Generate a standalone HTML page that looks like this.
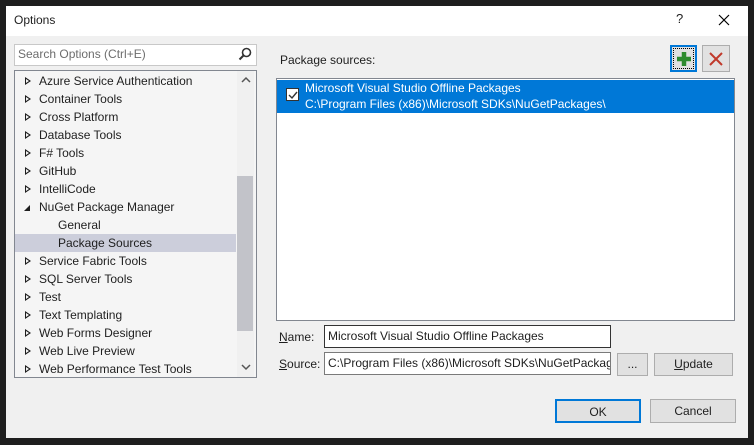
<!DOCTYPE html><html><head><style>
*{margin:0;padding:0;box-sizing:border-box}
body{width:754px;height:445px;background:#1e1e1e;font-family:"Segoe UI","Liberation Sans",sans-serif;font-size:12px;color:#1e1e1e;position:relative;overflow:hidden}
.a{position:absolute}
.dlg{left:6px;top:6px;width:742px;height:432px;background:#f0f0f0}
.title{left:6px;top:6px;width:742px;height:30px;background:#fff}
.tree{left:14px;top:70px;width:243px;height:308px;border:1px solid #828790;background:#f5f5f5;overflow:hidden}
.row{position:absolute;left:0;height:18px;line-height:18px;white-space:nowrap}
.tri{position:absolute;left:10px;top:5px;width:0;height:0;border-left:6px solid #1e1e1e;border-top:4px solid transparent;border-bottom:4px solid transparent}
.tri:after{content:"";position:absolute;left:-5px;top:-2px;border-left:3px solid #f5f5f5;border-top:2px solid transparent;border-bottom:2px solid transparent}
.inp{background:#fff;border:1px solid #7a7a7a;height:23px;line-height:21px;padding-left:3px;white-space:nowrap;overflow:hidden}
.btn{background:#e1e1e1;border:1px solid #adadad;text-align:center;line-height:21px}
</style></head><body>
<div class="a dlg"></div>
<div class="a title"></div>
<div class="a" style="left:14px;top:13px;font-size:12px">Options</div>
<div class="a" style="left:676px;top:11px;font-size:13px">?</div>
<svg class="a" style="left:718px;top:14px" width="12" height="12"><path d="M1 1L11 11M11 1L1 11" stroke="#000" stroke-width="1.2"/></svg>
<div class="a inp" style="left:14px;top:44px;width:243px;height:22px;border-color:#c8c8c8;color:#6d6d6d;line-height:19px">Search Options (Ctrl+E)</div>
<svg class="a" style="left:238px;top:47px" width="14" height="14"><circle cx="8.5" cy="5.5" r="4" fill="none" stroke="#333" stroke-width="1.6"/><path d="M5.5 8.5L1.5 12.5" stroke="#333" stroke-width="2"/></svg>
<div class="a tree">
<div class="a" style="left:222px;top:0;width:17px;height:306px;background:#f0f0f0"></div>
<div class="a" style="left:222px;top:105px;width:16px;height:155px;background:#c2c3c9"></div>
<svg class="a" style="left:226px;top:5px" width="10" height="8"><path d="M1 6L5 2L9 6" fill="none" stroke="#555" stroke-width="1.5"/></svg>
<svg class="a" style="left:226px;top:292px" width="10" height="8"><path d="M1 2L5 6L9 2" fill="none" stroke="#555" stroke-width="1.5"/></svg>
<div class="a" style="left:0;top:163px;width:221px;height:18px;background:#ccceDB"></div>
<div class="row" style="top:1px"><span class="tri"></span><span style="margin-left:24px">Azure Service Authentication</span></div>
<div class="row" style="top:19px"><span class="tri"></span><span style="margin-left:24px">Container Tools</span></div>
<div class="row" style="top:37px"><span class="tri"></span><span style="margin-left:24px">Cross Platform</span></div>
<div class="row" style="top:55px"><span class="tri"></span><span style="margin-left:24px">Database Tools</span></div>
<div class="row" style="top:73px"><span class="tri"></span><span style="margin-left:24px">F# Tools</span></div>
<div class="row" style="top:91px"><span class="tri"></span><span style="margin-left:24px">GitHub</span></div>
<div class="row" style="top:109px"><span class="tri"></span><span style="margin-left:24px">IntelliCode</span></div>
<div class="row" style="top:127px"><svg class="a" style="left:8px;top:6px" width="8" height="8"><path d="M7 1L7 7L1 7Z" fill="#1e1e1e"/></svg><span style="margin-left:24px">NuGet Package Manager</span></div>
<div class="row" style="top:145px"><span style="margin-left:43px">General</span></div>
<div class="row" style="top:163px"><span style="margin-left:43px">Package Sources</span></div>
<div class="row" style="top:181px"><span class="tri"></span><span style="margin-left:24px">Service Fabric Tools</span></div>
<div class="row" style="top:199px"><span class="tri"></span><span style="margin-left:24px">SQL Server Tools</span></div>
<div class="row" style="top:217px"><span class="tri"></span><span style="margin-left:24px">Test</span></div>
<div class="row" style="top:235px"><span class="tri"></span><span style="margin-left:24px">Text Templating</span></div>
<div class="row" style="top:253px"><span class="tri"></span><span style="margin-left:24px">Web Forms Designer</span></div>
<div class="row" style="top:271px"><span class="tri"></span><span style="margin-left:24px">Web Live Preview</span></div>
<div class="row" style="top:289px"><span class="tri"></span><span style="margin-left:24px">Web Performance Test Tools</span></div>
</div>
<div class="a" style="left:280px;top:53px">Package sources:</div>
<div class="a btn" style="left:670px;top:45px;width:27px;height:27px;border:2px solid #0078d7"><div style="position:absolute;inset:1px;border:1px dotted #000"></div>
<svg class="a" style="left:4px;top:4px" width="16" height="16"><path d="M8 1V15M1 8H15" stroke="#2e8b2e" stroke-width="4.5"/></svg></div>
<div class="a btn" style="left:702px;top:45px;width:28px;height:27px"><svg class="a" style="left:5px;top:5px" width="16" height="16"><path d="M2 2L14 14M14 2L2 14" stroke="#c0392b" stroke-width="2"/></svg></div>
<div class="a" style="left:276px;top:78px;width:459px;height:243px;background:#fff;border:1px solid #828790"></div>
<div class="a" style="left:277px;top:80px;width:457px;height:33px;background:#0078d7;color:#fff">
<div class="a" style="left:9px;top:8px;width:13px;height:13px;background:#fff;border:1px solid #333"><svg class="a" style="left:1px;top:1px" width="10" height="10"><path d="M1 5L4 8L9 2" fill="none" stroke="#333" stroke-width="1.4"/></svg></div>
<div class="a" style="left:28px;top:0;line-height:16px">Microsoft Visual Studio Offline Packages<br>C:\Program Files (x86)\Microsoft SDKs\NuGetPackages\</div>
</div>
<div class="a" style="left:279px;top:330px"><u>N</u>ame:</div>
<div class="a inp" style="left:324px;top:325px;width:287px;border-color:#333">Microsoft Visual Studio Offline Packages</div>
<div class="a" style="left:279px;top:357px"><u>S</u>ource:</div>
<div class="a inp" style="left:324px;top:352px;width:287px">C:\Program Files (x86)\Microsoft SDKs\NuGetPackages\</div>
<div class="a btn" style="left:617px;top:353px;width:31px;height:23px">...</div>
<div class="a btn" style="left:654px;top:353px;width:79px;height:23px"><u>U</u>pdate</div>
<div class="a btn" style="left:555px;top:399px;width:86px;height:24px;border:2px solid #0078d7;line-height:22px">OK</div>
<div class="a btn" style="left:650px;top:399px;width:86px;height:24px;line-height:22px">Cancel</div>
</body></html>
